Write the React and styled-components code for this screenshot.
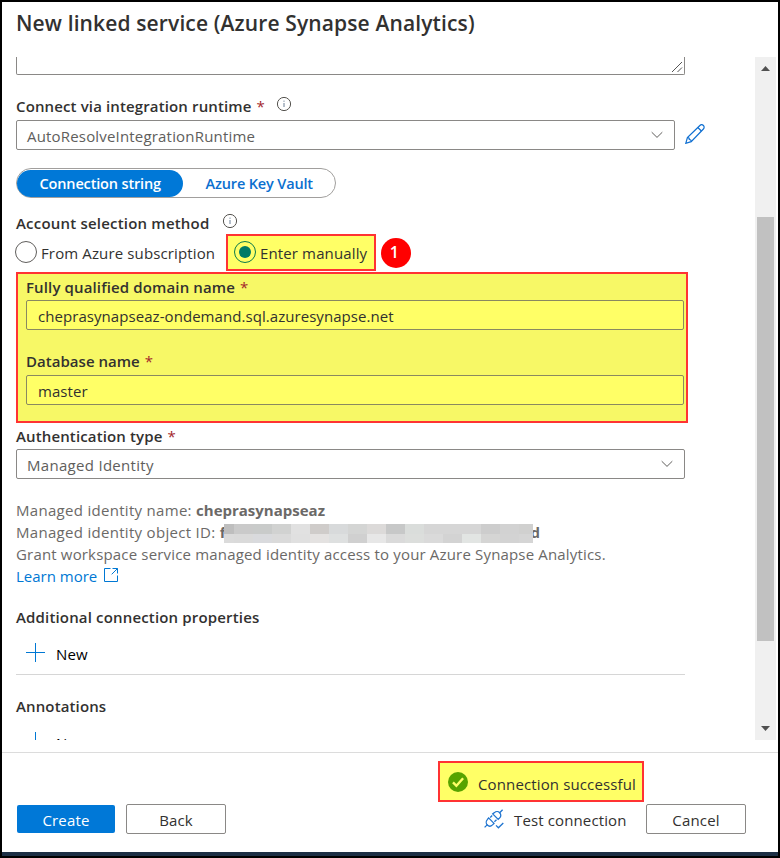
// App.jsx

import styled, { createGlobalStyle } from "styled-components";

const mosaic = [
  ["#bebebe", "#dbdbdb"],
  ["#cacaca", "#dadada"],
  ["#c9cbca", "#d9dadd"],
  ["#d1d2d1", "#dadada"],
  ["#e1e1e1", "#e0e0e0"],
  ["#cfccca", "#e4e2e1"],
  ["#d8dadb", "#dee0e0"],
  ["#d4d5d4", "#d0d0d0"],
  ["#dcdad9", "#e7e7e7"],
  ["#c7c8c8", "#dadada"],
  ["#dadddb", "#dcdedc"],
  ["#d6d6d6", "#dadada"],
  ["#d6d6d6", "#d3d3d3"],
  ["#d6d6d6", "#e2e5e3"],
  ["#cdcdcd", "#d5d5d4"],
  ["#d2d2d2", "#d3d3d3"],
  ["#d0d0cf", "#d5d5d5"],
];

const InfoIcon = () => (
  <svg width="16" height="16" viewBox="0 0 16 16" fill="none">
    <circle cx="8" cy="8" r="6.6" stroke="#55534f" />
    <path d="M8 7v4M8 4.6v1.2" stroke="#6b7f95" />
  </svg>
);

const ChevronIcon = () => (
  <svg width="12" height="8" viewBox="0 0 12 8" fill="none">
    <path d="M.7 1.2 6 6.4l5.3-5.2" stroke="#605e5c" strokeWidth="1" />
  </svg>
);

const PencilIcon = () => (
  <svg width="20" height="20" viewBox="0 0 20 20" fill="none" stroke="#0f6fd1" strokeWidth="1.2">
    <path d="M.8 19.3 2.4 13.6 14.9 1.5a2.4 2.4 0 0 1 3.5 3.5L6.2 17.6Z" />
    <path d="M12.8 3.5 16.4 7M2.4 13.6c1.4-.1 2 .4 1.9 1.9 1.5 0 2 .7 1.9 2.1" />
  </svg>
);

const ExternalIcon = () => (
  <svg width="16" height="16" viewBox="0 0 16 16" fill="none" stroke="#0078d4">
    <path d="M7.5 1.5h-6v13h13v-6M9.5 1.5h5v5M14.5 1.5 8.7 7.3" />
  </svg>
);

const PlusIcon = () => (
  <svg width="19" height="19" viewBox="0 0 19 19" stroke="#0078d4">
    <path d="M9.5 0v19M0 9.5h19" />
  </svg>
);

const CheckIcon = () => (
  <svg width="20" height="20" viewBox="0 0 20 20" fill="none">
    <circle cx="10" cy="10" r="10" fill="#57a300" />
    <path d="m5 10.3 3.4 3.5 6.7-7.6" stroke="#ffff66" strokeWidth="2.4" />
  </svg>
);

const PlugIcon = () => (
  <svg width="20" height="20" viewBox="0 0 20 20" fill="none" stroke="#1f74d0" strokeWidth="1.3">
    <path d="M.6 18.4 3.4 15.6M15.4 4 18.6.8" />
    <path d="M4.6 8.9 10 14.4l-1.5 1.5c-1.6 1.5-3.8 1.5-5.2.1s-1.4-3.9 0-5.4Z" />
    <path d="m8.7 4.9 5.5 5.5 1.5-1.5c1.5-1.5 1.4-3.8 0-5.2s-3.7-1.6-5.2-.1Z" />
    <path d="m6.2 8.5 2-2M10.4 12.7l2.1-2M12 16.4l2.4 2.4 4.9-4.8" />
  </svg>
);

const ArrowIcon = ({ down }) => (
  <svg width="9" height="5" viewBox="0 0 9 5" fill="#505050">
    <path d={down ? "M0 0h9L4.5 5Z" : "M0 5h9L4.5 0Z"} />
  </svg>
);

const App = () => {
  return (
    <Frame>
      <GlobalStyle />
      <Title>New linked service (Azure Synapse Analytics)</Title>

      <Body>
        <Content>
          <TextArea>
            <svg width="12" height="12" viewBox="0 0 12 12" stroke="#555">
              <path d="M1 11 11 1M6.5 11 11 6.5" />
            </svg>
          </TextArea>

          <Label $top={20}>
            Connect via integration runtime <Star>*</Star>
            <Info $gap={11}><InfoIcon /></Info>
          </Label>
          <Row>
            <Select $width={659}>
              <Value>AutoResolveIntegrationRuntime</Value>
              <ChevronIcon />
            </Select>
            <PencilIcon />
          </Row>

          <Pivot>
            <Tab $active>Connection string</Tab>
            <Tab>Azure Key Vault</Tab>
          </Pivot>

          <Label $top={14} $space={0.2}>
            Account selection method
            <Info $gap={13}><InfoIcon /></Info>
          </Label>
          <RadioRow>
            <Choice>
              <Radio />
              <span>From Azure subscription</span>
            </Choice>
            <Marked>
              <Radio $checked />
              <span>Enter manually</span>
            </Marked>
            <Badge>1</Badge>
          </RadioRow>

          <MarkedGroup>
            <Label $top={1} $bottom={1}>
              Fully qualified domain name <Star>*</Star>
            </Label>
            <Input>cheprasynapseaz-ondemand.sql.azuresynapse.net</Input>
            <Label $top={20} $space={0.03}>
              Database name <Star>*</Star>
            </Label>
            <Input>master</Input>
          </MarkedGroup>

          <Label $top={1} $bottom={1}>
            Authentication type <Star>*</Star>
          </Label>
          <Select $width={669}>
            <Value $space={0.3}>Managed Identity</Value>
            <ChevronIcon />
          </Select>

          <Details>
            <Line $space={0.3}>Managed identity name: <b>cheprasynapseaz</b></Line>
            <Line $space={0.3}>
              Managed identity object ID: <b>f</b>
              <Mosaic>
                {mosaic.map(([top, bottom], i) => (
                  <Pixel key={i} $top={top} $bottom={bottom} />
                ))}
              </Mosaic>
              <b>d</b>
            </Line>
            <Line $space={0.17}>
              Grant workspace service managed identity access to your Azure Synapse Analytics.
            </Line>
            <Link>
              Learn more <ExternalIcon />
            </Link>
          </Details>

          <Label $top={19} $space={0.16}>Additional connection properties</Label>
          <NewRow>
            <PlusIcon />
            <span>New</span>
          </NewRow>
          <Divider />
          <Label $top={20}>Annotations</Label>
          <NewRow>
            <PlusIcon />
            <span>New</span>
          </NewRow>
        </Content>

        <Scrollbar>
          <ArrowIcon />
          <Thumb />
          <ArrowIcon down />
        </Scrollbar>
      </Body>

      <Footer>
        <Status>
          <CheckIcon />
          <span>Connection successful</span>
        </Status>
        <Actions>
          <Button $primary>Create</Button>
          <Button>Back</Button>
          <Test>
            <PlugIcon />
            <span>Test connection</span>
          </Test>
          <Button>Cancel</Button>
        </Actions>
      </Footer>
      <Strip />
    </Frame>
  );
};

export default App;

const GlobalStyle = createGlobalStyle`
  body {
    margin: 0;
    font-family: "Open Sans", "Noto Sans", sans-serif;
    font-size: 15px;
    letter-spacing: 0.13px;
    color: #323130;
  }

  * {
    box-sizing: border-box;
  }

  svg {
    display: block;
    flex-shrink: 0;
  }
`;

const Frame = styled.div`
  display: flex;
  flex-direction: column;
  width: 780px;
  height: 858px;
  border: 2px solid #000;
  background: #fff;
  white-space: nowrap;
  overflow: hidden;
`;

const Title = styled.h1`
  height: 55px;
  margin: 0;
  padding-left: 14px;
  font-size: 21px;
  font-weight: 570;
  letter-spacing: 0.13px;
  line-height: 43px;
`;

const Body = styled.div`
  display: flex;
  justify-content: space-between;
  height: 683px;
  padding-right: 2px;
  overflow: hidden;
`;

const Content = styled.div`
  padding-left: 14px;
`;

const TextArea = styled.div`
  display: flex;
  align-items: flex-end;
  justify-content: flex-end;
  width: 669px;
  height: 18px;
  padding: 0 1px 1px 0;
  border: 1px solid #8a8886;
  border-top: none;
  border-radius: 0 0 2px 2px;
`;

const Label = styled.div`
  display: flex;
  align-items: center;
  height: 25px;
  margin-top: ${({ $top }) => $top}px;
  padding-bottom: ${({ $bottom }) => $bottom ?? 3}px;
  font-weight: 590;
  letter-spacing: ${({ $space }) => $space ?? 0.13}px;
  white-space: pre;
`;

const Star = styled.span`
  margin-left: 1px;
  color: #a4262c;
  font-weight: 400;
`;

const Info = styled.span`
  margin: -5px 0 0 ${({ $gap }) => $gap}px;
`;

const Row = styled.div`
  display: flex;
  align-items: center;
  gap: 10px;

  > svg {
    margin-bottom: 2px;
  }
`;

const Select = styled.div`
  display: flex;
  align-items: center;
  justify-content: space-between;
  width: ${({ $width }) => $width}px;
  height: 30px;
  padding: 0 11px 0 10px;
  border: 1px solid #8a8886;
  border-radius: 2px;
`;

const Value = styled.span`
  padding-top: 1px;
  color: #605e5c;
  letter-spacing: ${({ $space }) => $space ?? 0.18}px;
`;

const Pivot = styled.div`
  display: flex;
  width: 320px;
  height: 30px;
  margin-top: 18px;
  padding: 1px 0 0;
  border: 1px solid #a19f9d;
  border-radius: 15px;
`;

const Tab = styled.div`
  width: ${({ $active }) => ($active ? 167 : 152)}px;
  height: 27px;
  border-radius: 14px;
  background: ${({ $active }) => ($active ? "#0078d7" : "transparent")};
  color: ${({ $active }) => ($active ? "#fff" : "#0b6fcf")};
  font-size: 14.5px;
  font-weight: 600;
  letter-spacing: -0.15px;
  line-height: 27px;
  text-align: center;
`;

const RadioRow = styled.div`
  display: flex;
  align-items: center;
  height: 37px;
  margin: -3px 0 0 -1px;
`;

const Choice = styled.div`
  display: flex;
  align-items: center;
  gap: 4px;
  width: 211px;
  height: 37px;
  padding-bottom: 1px;

  span {
    padding-top: 1px;
  }
`;

const Marked = styled(Choice)`
  width: 150px;
  padding-left: 6px;
  border: 2px solid #ff3333;
  background: #ffff66;
`;

const Radio = styled.i`
  display: grid;
  place-items: center;
  width: 22px;
  height: 22px;
  flex-shrink: 0;
  border: 1px solid ${({ $checked }) => ($checked ? "#0b7a4b" : "#605e5c")};
  border-radius: 50%;

  &::after {
    content: "";
    width: 12px;
    height: 12px;
    border-radius: 50%;
    background: ${({ $checked }) => ($checked ? "#007a66" : "transparent")};
  }
`;

const Badge = styled.div`
  width: 30px;
  height: 30px;
  margin-left: 5px;
  padding-right: 3px;
  border-radius: 50%;
  background: #ff0000;
  color: #fff;
  font-size: 16px;
  font-weight: 600;
  line-height: 29px;
  text-align: center;
`;

const MarkedGroup = styled.div`
  width: 672px;
  height: 151px;
  margin-top: 1px;
  padding-left: 8px;
  border: 2px solid #ff3333;
  background: #f7f866;
`;

const Input = styled.div`
  width: 658px;
  height: 30px;
  padding: 2px 11px 0;
  border: 1px solid #8a8960;
  border-radius: 2px;
  background: #ffff66;
  letter-spacing: 0.06px;
  line-height: 26px;
`;

const Details = styled.div`
  margin-top: 20px;
  color: #6b6967;
  line-height: 22px;
`;

const Line = styled.div`
  display: flex;
  height: 22px;
  letter-spacing: ${({ $space }) => $space}px;
  white-space: pre;

  b {
    letter-spacing: 0;
  }
`;

const Mosaic = styled.span`
  display: flex;
  width: 309px;
  height: 19px;
  margin: 3px -3px 0 -1px;
  z-index: 1;
`;

const Pixel = styled.span`
  width: 19px;
  flex-shrink: 0;
  background: linear-gradient(
    ${({ $top }) => $top} 10px,
    ${({ $bottom }) => $bottom} 10px
  );

  &:first-child {
    width: 10px;
  }

  &:last-child {
    width: 14px;
  }
`;

const Link = styled.a`
  display: flex;
  gap: 6px;
  color: #0078d4;
  letter-spacing: 0;

  svg {
    margin-top: 2px;
  }
`;

const NewRow = styled.div`
  display: flex;
  align-items: center;
  gap: 11px;
  height: 43px;
  padding-left: 10px;
  color: #000;

  span {
    padding-top: 2px;
  }
`;

const Divider = styled.div`
  width: 669px;
  height: 1px;
  background: #d6d6d6;
`;

const Scrollbar = styled.div`
  display: flex;
  flex-direction: column;
  align-items: center;
  width: 21px;
  height: 683px;
  padding: 9px 0;
  background: #f0f0f0;
`;

const Thumb = styled.div`
  width: 17px;
  height: 424px;
  margin: 146px 0 85px;
  background: #c1c1c1;
`;

const Footer = styled.div`
  height: 100px;
  margin-top: 12px;
  border-top: 1px solid #dcdcdc;
`;

const Status = styled.div`
  display: flex;
  align-items: center;
  gap: 10px;
  width: 206px;
  height: 41px;
  margin: 8px 0 0 436px;
  padding-left: 8px;
  border: 2px solid #ff3333;
  background: #ffff66;

  span {
    padding-top: 5px;
  }
`;

const Actions = styled.div`
  display: flex;
  align-items: center;
  height: 30px;
  margin: 2px 0 0 15px;
`;

const Button = styled.button`
  width: ${({ $primary }) => ($primary ? 98 : 100)}px;
  height: ${({ $primary }) => ($primary ? 28 : 30)}px;
  margin: 0;
  margin-right: ${({ $primary }) => ($primary ? 11 : 0)}px;
  padding: 1px 0 0;
  border: ${({ $primary }) => ($primary ? "none" : "1px solid #8a8886")};
  border-radius: 2px;
  background: ${({ $primary }) => ($primary ? "#0078d7" : "#fff")};
  color: ${({ $primary }) => ($primary ? "#fff" : "#323130")};
  font: inherit;
  letter-spacing: 0.15px;
`;

const Test = styled.div`
  display: flex;
  align-items: center;
  gap: 10px;
  width: 162px;
  margin-left: 258px;

  span {
    padding-top: 1px;
  }
`;

const Strip = styled.div`
  height: 4px;
  background: #1d2f45;
`;
